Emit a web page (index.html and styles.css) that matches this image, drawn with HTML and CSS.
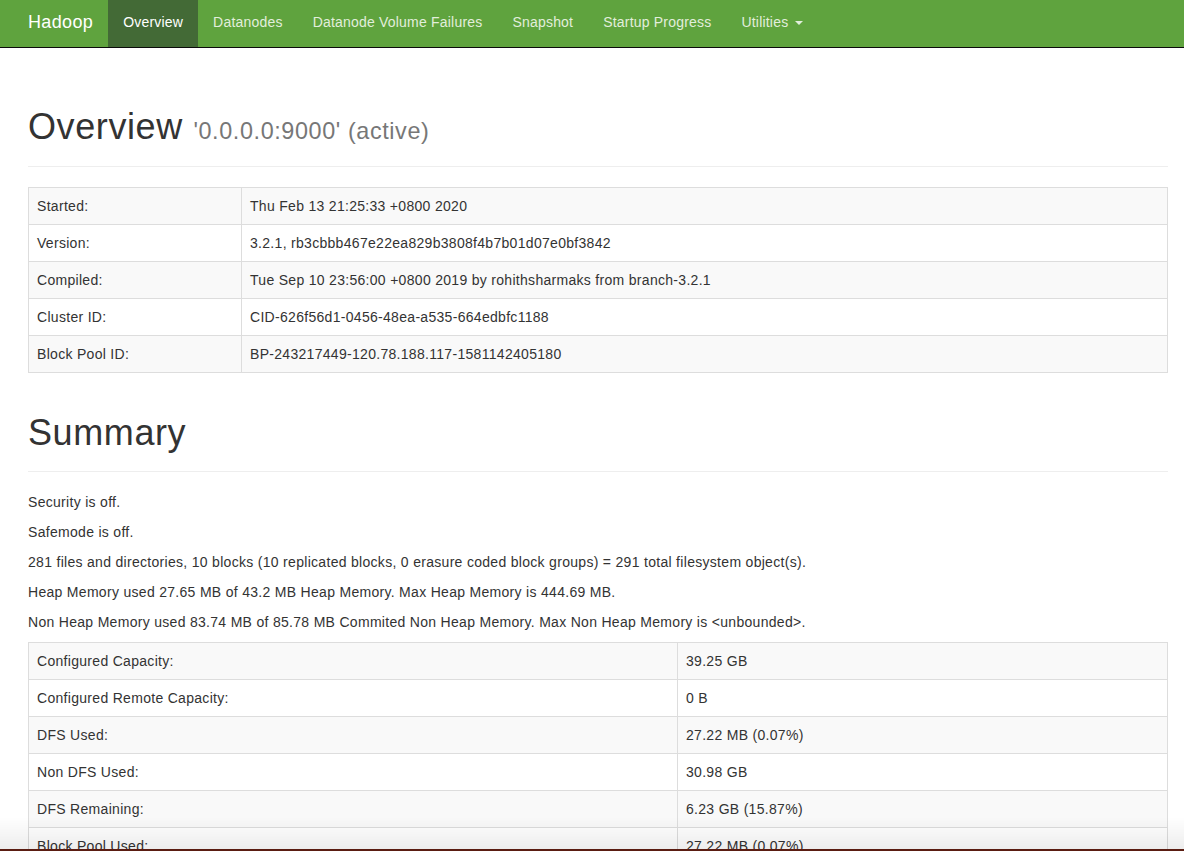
FILE: index.html
```html
<!DOCTYPE html>
<html>
<head>
<meta charset="utf-8">
<title>Namenode information</title>
<link rel="stylesheet" href="styles.css">
</head>
<body>
<header class="navbar">
  <div class="nav-inner">
    <a class="brand" href="#">Hadoop</a>
    <ul class="nav">
      <li class="active"><a href="#">Overview</a></li>
      <li><a href="#">Datanodes</a></li>
      <li><a href="#">Datanode Volume Failures</a></li>
      <li><a href="#">Snapshot</a></li>
      <li><a href="#">Startup Progress</a></li>
      <li><a href="#">Utilities <span class="caret"></span></a></li>
    </ul>
  </div>
</header>

<main class="container">
  <div class="page-header">
    <h1>Overview <small>'0.0.0.0:9000' (active)</small></h1>
  </div>

  <table class="table info">
    <tr><th>Started:</th><td>Thu Feb 13 21:25:33 +0800 2020</td></tr>
    <tr><th>Version:</th><td>3.2.1, rb3cbbb467e22ea829b3808f4b7b01d07e0bf3842</td></tr>
    <tr><th>Compiled:</th><td>Tue Sep 10 23:56:00 +0800 2019 by rohithsharmaks from branch-3.2.1</td></tr>
    <tr><th>Cluster ID:</th><td>CID-626f56d1-0456-48ea-a535-664edbfc1188</td></tr>
    <tr><th>Block Pool ID:</th><td>BP-243217449-120.78.188.117-1581142405180</td></tr>
  </table>

  <div class="page-header">
    <h1>Summary</h1>
  </div>

  <p>Security is off.</p>
  <p>Safemode is off.</p>
  <p>281 files and directories, 10 blocks (10 replicated blocks, 0 erasure coded block groups) = 291 total filesystem object(s).</p>
  <p>Heap Memory used 27.65 MB of 43.2 MB Heap Memory. Max Heap Memory is 444.69 MB.</p>
  <p>Non Heap Memory used 83.74 MB of 85.78 MB Commited Non Heap Memory. Max Non Heap Memory is &lt;unbounded&gt;.</p>

  <table class="table summary">
    <tr><th>Configured Capacity:</th><td>39.25 GB</td></tr>
    <tr><th>Configured Remote Capacity:</th><td>0 B</td></tr>
    <tr><th>DFS Used:</th><td>27.22 MB (0.07%)</td></tr>
    <tr><th>Non DFS Used:</th><td>30.98 GB</td></tr>
    <tr><th>DFS Remaining:</th><td>6.23 GB (15.87%)</td></tr>
    <tr><th>Block Pool Used:</th><td>27.22 MB (0.07%)</td></tr>
    <tr><th>DataNodes usages% (Min/Median/Max/stdDev):</th><td>0.07% / 0.07% / 0.07% / 0.00%</td></tr>
    <tr><th>Live Nodes</th><td>1 (Decommissioned: 0, In Maintenance: 0)</td></tr>
    <tr><th>Dead Nodes</th><td>0 (Decommissioned: 0, In Maintenance: 0)</td></tr>
  </table>
</main>

<div class="window-edge"></div>
</body>
</html>
```

FILE: styles.css
```css
html, body {
  margin: 0;
  padding: 0;
}

body {
  font-family: "Liberation Sans", Arial, Helvetica, sans-serif;
  font-size: 14px;
  line-height: 20px;
  letter-spacing: 0.3px;
  color: #333;
  background: #fff;
}

a {
  text-decoration: none;
}

/* Navbar */
.navbar {
  background: #5fa33e;
  height: 47px;
  border-bottom: 1px solid #0b0b0b;
}

.nav-inner {
  display: flex;
  align-items: stretch;
  height: 47px;
  padding-left: 13px;
}

.brand {
  display: block;
  padding: 12px 15px 0 15px;
  font-size: 18px;
  line-height: 20px;
  letter-spacing: 0.35px;
  color: #fff;
}

.nav {
  list-style: none;
  margin: 0;
  padding: 0;
  display: flex;
}

.nav li a {
  display: block;
  height: 47px;
  box-sizing: border-box;
  padding: 12px 15px 0 15px;
  line-height: 20px;
  letter-spacing: 0.2px;
  color: #e2eedc;
}

.nav li.active a {
  background: #436a36;
  color: #fff;
}

.caret {
  display: inline-block;
  width: 0;
  height: 0;
  margin-left: 3px;
  vertical-align: middle;
  border-top: 4px solid #e2eedc;
  border-left: 4px solid transparent;
  border-right: 4px solid transparent;
}

/* Content */
.container {
  width: 1140px;
  margin-left: 28px;
  padding-top: 19px;
  padding-bottom: 40px;
}

.page-header {
  margin: 40px 0 20px;
  padding-bottom: 9px;
  border-bottom: 1px solid #eee;
}

.page-header h1 {
  margin: 0 0 10px;
  font-size: 36px;
  line-height: 1.1;
  font-weight: 500;
  letter-spacing: 0.6px;
  color: #333;
}

.page-header h1 small {
  font-size: 65%;
  font-weight: 400;
  line-height: 1;
  letter-spacing: 0.6px;
  color: #777;
}

p {
  margin: 0 0 10px;
}

.table {
  width: 100%;
  border-collapse: collapse;
  border: 1px solid #ddd;
  margin-bottom: 20px;
}

.table th,
.table td {
  padding: 8px;
  border: 1px solid #ddd;
  text-align: left;
  vertical-align: top;
  line-height: 20px;
}

.table th {
  font-weight: 400;
}

.table tr:nth-child(odd) {
  background: #f9f9f9;
}

.info th {
  width: 196px;
}

.summary th {
  width: 632px;
}

/* bottom edge of the captured window */
.window-edge {
  position: fixed;
  left: 0;
  right: 0;
  bottom: 0;
  height: 34px;
  background: linear-gradient(to bottom, rgba(0,0,0,0) 0, rgba(0,0,0,0.07) 32px, #5a1d12 32px, #5a1d12 34px);
  pointer-events: none;
}
```
